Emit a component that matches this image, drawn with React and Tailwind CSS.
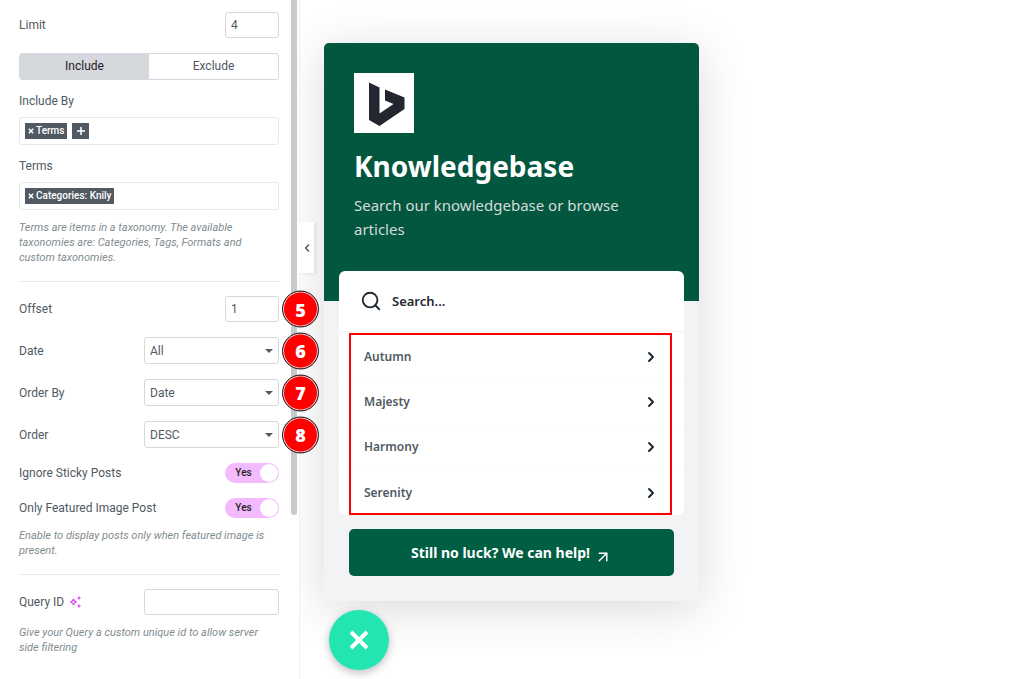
import { useState } from 'react';
import clsx from 'clsx';
import { Search, ChevronRight, ChevronLeft, ArrowUpRight } from 'lucide-react';

const articles = ['Autumn', 'Majesty', 'Harmony', 'Serenity'];

const selects = [
    { id: 'date', label: 'Date', options: ['All', 'Past Day', 'Past Week'], step: 6 },
    { id: 'order-by', label: 'Order By', options: ['Date', 'Title', 'Random'], step: 7 },
    { id: 'order', label: 'Order', options: ['DESC', 'ASC'], step: 8 },
];

const StepBadge = ({ children }) => (
    <span className="absolute -right-10 top-1/2 z-20 flex h-[37px] w-[37px] -translate-y-1/2 items-center justify-center rounded-full border border-[#1f2a33] bg-[#ff0000] font-['Open_Sans',sans-serif] text-lg font-extrabold text-white shadow-[inset_0_0_0_1px_#e8d5d5]">
        {children}
    </span>
);

const Row = ({ id, label, icon, step, children }) => (
    <div className="relative flex items-center justify-between">
        <label htmlFor={id} className="flex items-center gap-[5px]">
            {label}
            {icon}
        </label>
        {children}
        {step && <StepBadge>{step}</StepBadge>}
    </div>
);

const TextField = ({ id, value, wide }) => (
    <input
        id={id}
        type="text"
        defaultValue={value}
        className={clsx(
            'h-[26px] rounded-[3px] border border-[#d5d8dc] bg-white px-[5px] text-[#515962] outline-none',
            wide ? 'w-[135px]' : 'w-[54px]'
        )}
    />
);

const SelectField = ({ id, options }) => (
    <div className="relative w-[135px]">
        <select
            id={id}
            className="h-[27px] w-full appearance-none rounded-[3px] border border-[#d5d8dc] bg-white px-[5px] text-[#515962] outline-none"
        >
            {options.map((option) => (
                <option key={option}>{option}</option>
            ))}
        </select>
        <svg viewBox="0 0 8 4" className="pointer-events-none absolute right-1.5 top-3 h-1 w-2 fill-[#515962]">
            <path d="M0 0h8L4 4z" />
        </svg>
    </div>
);

const Toggle = ({ id }) => {
    const [on, setOn] = useState(true);

    return (
        <span className="relative flex h-5 w-[54px] items-center rounded-full bg-[#f3bafd]">
            <input
                id={id}
                type="checkbox"
                checked={on}
                onChange={() => setOn(!on)}
                className="absolute inset-0 cursor-pointer appearance-none rounded-full"
            />
            <span className="w-[37px] text-center text-[10px] font-medium text-[#1f2124]">{on ? 'Yes' : 'No'}</span>
            <span className="pointer-events-none absolute right-px top-px h-[18px] w-[18px] rounded-full bg-white" />
        </span>
    );
};

const Tag = ({ children }) => (
    <span className="flex h-4 items-center gap-0.5 bg-[#515962] px-[3px] text-[10px] font-medium text-white">
        <svg viewBox="0 0 6 6" className="h-1.5 w-1.5 stroke-white stroke-[1.5]">
            <path d="M.8.8l4.400 4.400M5.200.8L.8 5.200" />
        </svg>
        {children}
    </span>
);

const TagField = ({ label, children }) => (
    <div>
        <p className="leading-3">{label}</p>
        <div className="mt-2.5 flex h-7 items-center gap-[5px] rounded-[3px] border border-[#e6e8ea] px-[5px]">{children}</div>
    </div>
);

const Hint = ({ children }) => <p className="mt-2.5 pb-px text-[11px] italic leading-[15px] text-[#7f8c90]">{children}</p>;

const Sparkle = () => (
    <svg viewBox="0 0 12 12" className="h-3 w-3 fill-none stroke-[#d946ef]">
        <path d="M4.5 2.800Q4.900 5.600 7.700 6 4.900 6.400 4.500 9.200 4.100 6.400 1.300 6 4.100 5.600 4.500 2.800z" strokeWidth="1.2" />
        <path d="M10 .6v3M8.500 2.100h3M10 8.400v3M8.500 9.900h3" strokeWidth="1.2" />
    </svg>
);

const QueryPanel = () => {
    const [mode, setMode] = useState('Include');

    return (
        <aside className="relative z-10 flex w-[300px] shrink-0 border-r border-[#f1f2f3] bg-white font-[Roboto,sans-serif] text-xs text-[#515962]">
            <div className="ml-[19px] mr-3 flex w-[260px] flex-col gap-[15px] pt-3">
                <Row id="limit" label="Limit">
                    <TextField id="limit" value="4" />
                </Row>

                <div className="flex h-[27px] overflow-hidden rounded-[3px] border border-[#d5d8dc]">
                    {['Include', 'Exclude'].map((item) => (
                        <button
                            key={item}
                            type="button"
                            onClick={() => setMode(item)}
                            className={clsx('flex-1 pb-px', mode === item && 'bg-[#d5d8dc] text-[#1f2124]')}
                        >
                            {item}
                        </button>
                    ))}
                </div>

                <TagField label="Include By">
                    <Tag>Terms</Tag>
                    <button type="button" aria-label="Add" className="flex h-4 w-[17px] items-center justify-center bg-[#515962]">
                        <svg viewBox="0 0 8 8" className="h-2 w-2 stroke-white stroke-[1.5]">
                            <path d="M4 0v8M0 4h8" />
                        </svg>
                    </button>
                </TagField>

                <div>
                    <TagField label="Terms">
                        <Tag>Categories: Knily</Tag>
                    </TagField>
                    <Hint>Terms are items in a taxonomy. The available taxonomies are: Categories, Tags, Formats and custom taxonomies.</Hint>
                </div>

                <div className="flex flex-col gap-[15px] border-t border-[#e6e8ea] pt-3.5">
                    <Row id="offset" label="Offset" step={5}>
                        <TextField id="offset" value="1" />
                    </Row>
                    {selects.map((item) => (
                        <Row key={item.id} id={item.id} label={item.label} step={item.step}>
                            <SelectField id={item.id} options={item.options} />
                        </Row>
                    ))}
                    <Row id="sticky" label="Ignore Sticky Posts">
                        <Toggle id="sticky" />
                    </Row>
                    <div>
                        <Row id="featured" label="Only Featured Image Post">
                            <Toggle id="featured" />
                        </Row>
                        <Hint>Enable to display posts only when featured image is present.</Hint>
                    </div>
                </div>

                <div className="border-t border-[#e6e8ea] pt-3.5">
                    <Row id="query-id" label="Query ID" icon={<Sparkle />}>
                        <TextField id="query-id" value="" wide />
                    </Row>
                    <Hint>Give your Query a custom unique id to allow server side filtering</Hint>
                </div>
            </div>

            <div className="h-[515px] w-1.5 rounded-b-full bg-[#c6cacb]" />

            <button
                type="button"
                aria-label="Collapse panel"
                className="absolute left-full top-[222px] flex h-[51px] w-[15px] items-center justify-center bg-white text-[#515962] shadow-[2px_1px_3px_rgba(0,0,0,0.08)]"
            >
                <ChevronLeft className="h-3 w-3" strokeWidth={3} />
            </button>
        </aside>
    );
};

const HelpWidget = () => (
    <section className="w-[375px] rounded-[5px] bg-[#f3f3f5] pb-[25px] shadow-[0_8px_50px_rgba(0,0,0,0.15)]">
        <header className="rounded-t-[5px] bg-[#03573f] px-[30px] pb-[60px] pt-[30px]">
            <div className="h-[60px] w-[60px] bg-white">
                <svg viewBox="0 0 60 60" className="h-full w-full fill-[#24262f]">
                    <path d="M15 9.500L25.500 14.500V40.500L39.500 31 31 27.500V16.500L50.500 24.500V36L25.500 53 15 47z" />
                </svg>
            </div>
            <h1 className="mt-[13px] text-[28px] font-bold leading-10 text-white">Knowledgebase</h1>
            <p className="mt-[7px] text-[15px] leading-6 text-[#d4dcd9]">Search our knowledgebase or browse articles</p>
        </header>

        <div className="relative mx-[15px] -mt-[30px] rounded-[6px] bg-white">
            <label className="flex h-[61px] items-center gap-2.5 border-b border-[#f3f3f5] pl-[21px]">
                <Search className="h-[22px] w-[22px] text-[#1f2933]" strokeWidth={2} />
                <input
                    type="text"
                    aria-label="Search"
                    placeholder="Search..."
                    className="w-60 pt-0.5 text-[13px] font-semibold text-[#1f2933] outline-none placeholder:text-[#1f2933]"
                />
            </label>
            <ul className="pt-[3px]">
                {articles.map((title) => (
                    <li key={title} className="h-[45px] border-b border-[#fbfbfb] last:border-0">
                        <a href="#" className="flex h-full items-center justify-between px-[25px] text-xs font-semibold text-[#4f5a63]">
                            {title}
                            <ChevronRight className="h-4 w-4 text-[#1f2933]" strokeWidth={3} />
                        </a>
                    </li>
                ))}
            </ul>
            <div className="pointer-events-none absolute bottom-0 left-2.5 right-3 top-[62px] border-2 border-[#ff0000]" />
        </div>

        <a
            href="#"
            className="mx-[25px] mt-3.5 flex h-[47px] items-center justify-center gap-1 rounded-[5px] bg-[#005e43] text-sm font-bold text-white"
        >
            Still no luck? We can help!
            <ArrowUpRight className="mt-2 h-[18px] w-[18px]" strokeWidth={2} />
        </a>
    </section>
);

export default function App() {
    return (
        <div className="flex min-h-screen bg-white">
            <QueryPanel />
            <main className="flex-1 overflow-hidden pl-6 pt-[43px] font-['Noto_Sans',sans-serif]">
                <HelpWidget />
                <button
                    type="button"
                    aria-label="Close"
                    className="ml-[5px] mt-[9px] flex h-[60px] w-[60px] items-center justify-center rounded-full bg-[#22e5b2] shadow-[0_3px_8px_rgba(0,0,0,0.25)]"
                >
                    <svg viewBox="0 0 20 20" className="h-5 w-5 stroke-white stroke-[4]">
                        <path d="M2 2l16 16M18 2L2 18" />
                    </svg>
                </button>
            </main>
        </div>
    );
}
